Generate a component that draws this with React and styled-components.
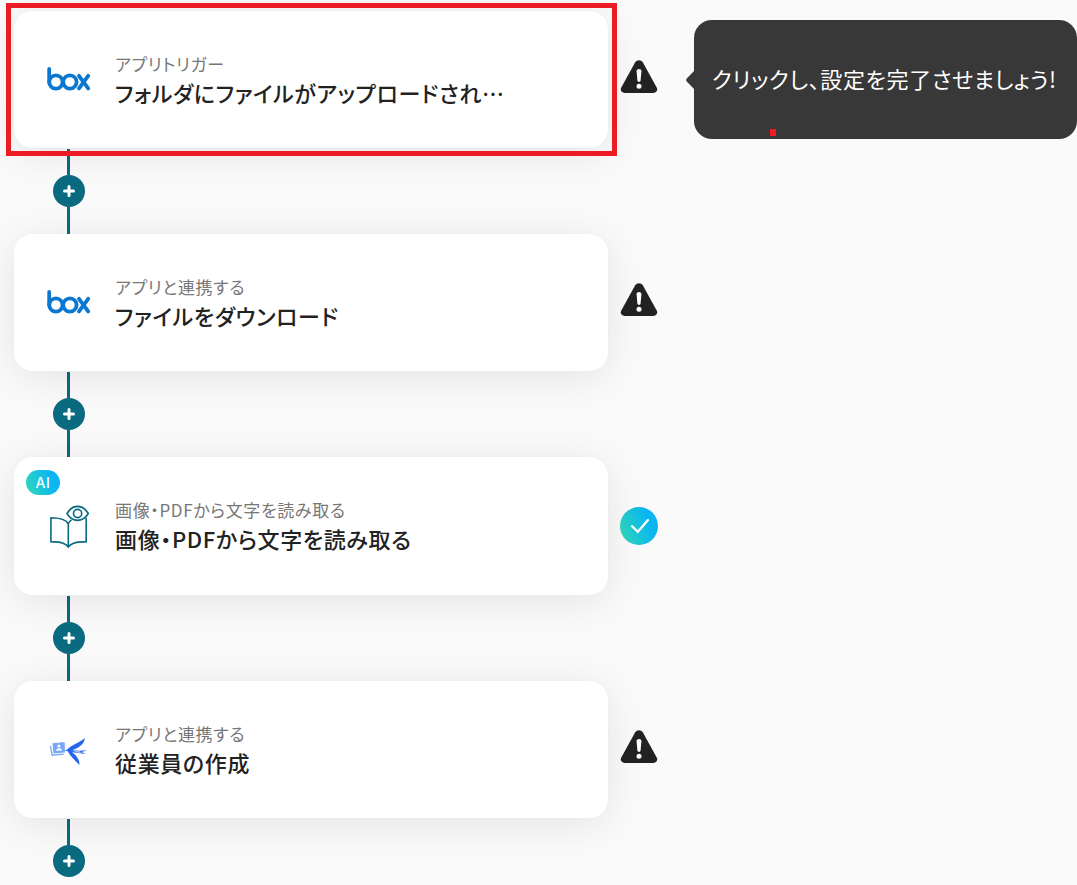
import React from "react";
import styled, { createGlobalStyle } from "styled-components";

const teal = "#0a6a80";
const red = "#ed1c24";

const GlobalStyle = createGlobalStyle`
  * {
    box-sizing: border-box;
  }

  body {
    margin: 0;
    background: #fafafa;
    color: #222;
    font-family: "Noto Sans CJK JP", "Noto Sans", sans-serif;
    font-feature-settings: "palt";
    letter-spacing: 0.04em;
  }
`;

const Page = styled.main`
  min-height: 100vh;
  padding: 11px 0 0 14px;
`;

const Flow = styled.ol`
  margin: 0;
  padding: 0;
  list-style: none;
`;

const Row = styled.div`
  display: grid;
  grid-template-columns: minmax(0, 594px) 38px minmax(0, 1fr);
  column-gap: 12px;
  align-items: center;
`;

const Card = styled.article`
  position: relative;
  display: flex;
  align-items: center;
  gap: 24px;
  min-height: ${(props) => (props.$ai ? "138px" : "137px")};
  padding: 16px 33px;
  border-radius: 18px;
  background: #fff;
  box-shadow: 0 0 1px rgba(0, 0, 0, 0.08), 0 6px 40px rgba(0, 0, 0, 0.09);

  svg {
    flex: none;
  }
`;

const Highlight = styled.span`
  position: absolute;
  inset: -8px -9px -8px -8px;
  border: 5px solid ${red};
  pointer-events: none;
`;

const AiBadge = styled.span`
  position: absolute;
  top: 13px;
  left: 12px;
  width: 34px;
  border-radius: 13px;
  background: linear-gradient(70deg, #2fd9b9, #0bb5f2 75%);
  color: #fff;
  font-family: Inter, "Open Sans", sans-serif;
  font-size: 14px;
  font-weight: 500;
  line-height: 25px;
  text-align: center;
`;

const CardText = styled.div`
  min-width: 0;
`;

const Kind = styled.p`
  margin: 0;
  color: #777;
  font-size: 17px;
  line-height: 24px;
`;

const Title = styled.h2`
  margin: 0;
  overflow: hidden;
  font-size: 22px;
  font-weight: 500;
  line-height: 32px;
  text-overflow: ellipsis;
  white-space: nowrap;
`;

const Status = styled.div`
  display: flex;
  justify-content: center;
  padding-bottom: ${(props) => (props.$warning ? "6px" : "0")};
`;

const Tooltip = styled.div`
  position: relative;
  display: flex;
  align-items: center;
  min-height: 119px;
  margin-left: 24px;
  padding: 0 18px 4px;
  border-radius: 18px;
  background: #383838;
  color: #fff;
  font-size: 22px;
  line-height: 32px;
  white-space: nowrap;
`;

const TooltipArrow = styled.svg`
  position: absolute;
  top: 50%;
  right: 100%;
  transform: translateY(-50%);
`;

const Marker = styled.span`
  position: absolute;
  bottom: 3px;
  left: 76px;
  width: 6px;
  height: 7px;
  background: ${red};
`;

const Connector = styled.div`
  display: flex;
  flex-direction: column;
  align-items: center;
  width: 32px;
  margin-left: 39px;
  padding-top: 1px;
`;

const Line = styled.span`
  width: 3px;
  height: ${(props) => (props.$end ? "27px" : "26px")};
  margin-right: 1px;
  background: ${teal};
`;

const AddButton = styled.button`
  display: grid;
  place-items: center;
  width: 32px;
  height: 32px;
  padding: 0;
  border: 0;
  border-radius: 50%;
  background: ${teal};
  cursor: pointer;
`;

function BoxLogo() {
  return (
    <svg width="44" height="28" viewBox="0 0 44 28" fill="none" stroke="#0a78d0" strokeWidth="3.8" strokeLinecap="round" role="img" aria-label="box">
      <path d="M2.2 3v13" />
      <circle cx="8.9" cy="16" r="6.7" />
      <circle cx="22.900" cy="16" r="6.7" />
      <path d="M32 9.800 41.2 22.400M41.2 9.800 32 22.400" />
    </svg>
  );
}

function ReaderIcon() {
  return (
    <svg width="44" height="44" viewBox="0 -1 44 44" fill="none" stroke={teal} strokeWidth="1.6" strokeLinejoin="round" aria-hidden="true">
      <path d="M21.3 42.2V19C19.3 14.7 13.5 12.7 3.9 12.7V37c8.2-.5 14.3.2 17.4 5.2 3.1-5 9.2-5.7 17.9-5.2V12.8" />
      <path d="M21.3 19c.5-1.9 1.5-3.1 3.2-4.2" />
      <path d="M20 8.5C25.5-1 35.5-1 41.3 8.5 35.5 17.7 25.5 17.7 20 8.5Z" fill="#fff" />
      <circle cx="30.6" cy="8.5" r="4.1" />
    </svg>
  );
}

function SwallowIcon() {
  return (
    <svg width="44" height="44" viewBox="0 -1 44 44" aria-hidden="true">
      <path d="M3.4 17.2 5.2 26.2 16.7 25.2" fill="none" stroke="#78a7f8" strokeWidth="1.3" />
      <path d="M5.5 14.3 10 13.7l1 .6 2-1 4.7-.1.3 10.3L6.5 24.6Z" fill="#78a7f8" />
      <circle cx="11.9" cy="17" r="1.5" fill="#fff" />
      <path d="M8.8 21.8c.2-3.3 6-3.4 6.3-.4Z" fill="#fff" />
      <path d="M17.8 21.7 20.6 20.2C23 16.5 31.500 14.500 37.8 9c-.2 4.500-4 9.500-12.500 12.200l7 .5 7.800-.4-5.200 1.700 3.800 2.100-7-1.200-6.500-.6c4 3.300 7.800 7 7.100 12.700-3.800-4.500-9.500-9.200-11.500-13.800Z" fill="#2566ee" />
      <path d="m25.500 22.300 7 .2 2.300.7-3 .2Z" fill="#fff" />
    </svg>
  );
}

function WarningIcon() {
  return (
    <svg width="38" height="34" viewBox="0 0 38 34" role="img" aria-label="未設定">
      <path d="M15.2 2.2c1.7-2.7 5.9-2.7 7.6 0l13.9 25.2c1.4 2.7-.3 5.6-3.3 5.6H4.6c-3 0-4.700-2.900-3.300-5.600Z" fill="#222" />
      <path d="M16.6 11.2c-.1-3 4.9-3 4.8 0l-.8 9.400c-.2 1.900-3 1.900-3.200 0Z" fill="#fff" />
      <circle cx="19" cy="26.2" r="2.5" fill="#fff" />
    </svg>
  );
}

function DoneIcon() {
  return (
    <svg width="38" height="38" viewBox="0 0 38 38" role="img" aria-label="設定済み">
      <defs>
        <linearGradient id="done" x1="0" y1="0.8" x2="1" y2="0.4">
          <stop offset="0" stopColor="#30dab8" />
          <stop offset="0.8" stopColor="#0bb5f2" />
        </linearGradient>
      </defs>
      <circle cx="19" cy="19" r="19" fill="url(#done)" />
      <path d="m12 19.2 5.8 5.6L28 13" fill="none" stroke="#fff" strokeWidth="2.3" strokeLinecap="round" />
    </svg>
  );
}

const steps = [
  {
    kind: "アプリトリガー",
    title: "フォルダにファイルがアップロードされ…",
    Icon: BoxLogo,
    active: true,
    hint: "クリックし、設定を完了させましょう!",
  },
  { kind: "アプリと連携する", title: "ファイルをダウンロード", Icon: BoxLogo },
  {
    kind: "画像・PDFから文字を読み取る",
    title: "画像・PDFから文字を読み取る",
    Icon: ReaderIcon,
    ai: true,
    done: true,
  },
  { kind: "アプリと連携する", title: "従業員の作成", Icon: SwallowIcon },
];

function Step({ step, last }) {
  const { kind, title, Icon, active, ai, done, hint } = step;
  return (
    <li>
      <Row>
        <Card $ai={ai}>
          {ai && <AiBadge>AI</AiBadge>}
          <Icon />
          <CardText>
            <Kind>{kind}</Kind>
            <Title>{title}</Title>
          </CardText>
          {active && <Highlight />}
        </Card>
        <Status $warning={!done}>{done ? <DoneIcon /> : <WarningIcon />}</Status>
        {hint && (
          <Tooltip role="tooltip">
            <TooltipArrow width="8" height="20" viewBox="0 0 8 20" aria-hidden="true">
              <path d="M8 1v18L.8 11.5Q-.4 10 .8 8.5Z" fill="#383838" />
            </TooltipArrow>
            {hint}
            <Marker />
          </Tooltip>
        )}
      </Row>
      <Connector>
        <Line />
        <AddButton type="button" aria-label="ステップを追加">
          <svg width="12" height="12" viewBox="0 0 12 12" stroke="#fff" strokeWidth="3" strokeLinecap="round" aria-hidden="true">
            <path d="M6 1.5v9M1.5 6h9" />
          </svg>
        </AddButton>
        {!last && <Line $end />}
      </Connector>
    </li>
  );
}

export default function App() {
  return (
    <>
      <GlobalStyle />
      <Page>
        <Flow>
          {steps.map((step, index) => (
            <Step key={index} step={step} last={index === steps.length - 1} />
          ))}
        </Flow>
      </Page>
    </>
  );
}
